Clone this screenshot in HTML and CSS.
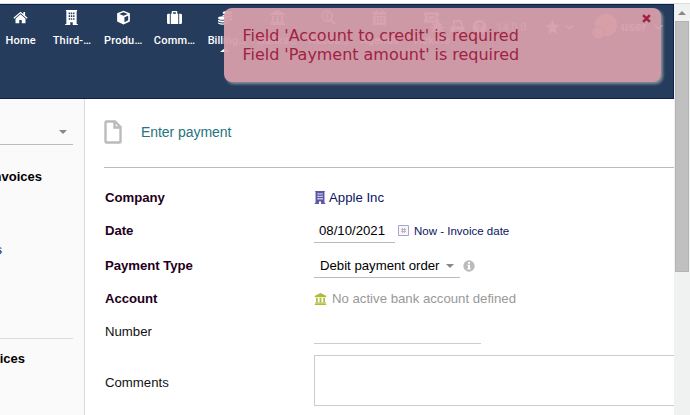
FILE: index.html
```html
<!DOCTYPE html>
<html lang="en">
<head>
<meta charset="utf-8">
<title>Enter payment</title>
<link rel="stylesheet" href="styles.css">
</head>
<body>
<svg class="defs" aria-hidden="true">
  <symbol id="bank" viewBox="0 0 16 16"><path d="M8 0L0 4v1.500h16V4zM2 6.500h2.300v5.700H2zM6.800 6.500h2.400v5.700H6.800zM11.700 6.500H14v5.700h-2.300zM1 12.500h14V14H1zM0 14.400h16V16H0z"/></symbol>
  <symbol id="building" viewBox="0 0 14 16"><path fill-rule="evenodd" d="M1 0h12v1h-.5v13.800h1.200V16H8.300v-3H5.700v3H.3v-1.200h1.200V1H1zM4 2.700v1.700h1.500V2.700zm2.300 0v1.700h1.500V2.700zm2.400 0v1.700h1.500V2.700zM4 5.700v1.700h1.500V5.700zm2.300 0v1.700h1.500V5.700zm2.400 0v1.700h1.500V5.700zM4 8.700v1.700h1.500V8.700zm2.300 0v1.700h1.500V8.700zm2.400 0v1.700h1.500V8.700z"/></symbol>
  <symbol id="chevron" viewBox="0 0 10 6"><path d="M1 1l4 4 4-4" fill="none" stroke="currentColor" stroke-width="1.700"/></symbol>
</svg>
<div class="window">
  <div class="page">
    <header class="topbar">
      <nav class="menu">
        <a class="item"><svg viewBox="0 0 18 16"><path d="M9 1L.5 8.300l1 1.100L9 3l7.500 6.400 1-1.100-3-2.600V1.500h-2v2.400z"/><path d="M9 4.200L3 9.400V15h4.500v-4h3v4H15V9.400z"/></svg><span>Home</span></a>
        <a class="item"><svg viewBox="0 0 14 16"><use href="#building"/></svg><span>Third-…</span></a>
        <a class="item"><svg viewBox="0 0 16 16"><path d="M8 .8l6.800 2.600v8.800L8 15.500l-6.800-3.300V3.400zM8 2.500L3.500 4.200 8 6l4.500-1.800zM9 7.700v5.300l4-2V6.100z" fill-rule="evenodd"/></svg><span>Produ…</span></a>
        <a class="item"><svg viewBox="0 0 16 16"><path fill-rule="evenodd" d="M1.500 4H3v11H1.500Q0 15 0 13.500v-8Q0 4 1.500 4zM4 4h1V2q0-1 1-1h4q1 0 1 1v2h1v11H4zm2.500-1.500V4h3V2.500zM13 4h1.500Q16 4 16 5.500v8q0 1.500-1.500 1.500H13z"/></svg><span>Comm…</span></a>
        <a class="item current"><svg viewBox="0 0 16 16"><ellipse cx="10" cy="3" rx="5" ry="2"/><path d="M5 5q5 2.300 10 0v2q-2 1.500-5 1.300Q9 6.500 5 6.300zM11 9.300q2.500 0 4-1v2q-1.500 1.400-4 1.500z"/><ellipse cx="5" cy="8.500" rx="5" ry="1.900"/><path d="M0 10.300q5 2.300 10 0v1.600q-5 2.600-10 0zM0 13.200q5 2.300 10 0v1.300q-5 2.600-10 0z"/></svg><span>Billing…</span></a>
        <a class="item"><svg viewBox="0 0 16 16"><use href="#bank"/></svg><span>Banks…</span></a>
        <a class="item"><svg viewBox="0 0 16 16"><circle cx="6.500" cy="6.500" r="5.300" fill="none" stroke="currentColor" stroke-width="2"/><path d="M10 11.500l1.500-1.500 4.500 4.500-1.500 1.500z"/><path d="M8.300 4.800q-3-1.400-3.200.2 0 1 1.500 1.400 1.600.5 1.500 1.600-.5 1.600-3.300.4M6.500 3v7" fill="none" stroke="currentColor"/></svg><span>Accou…</span></a>
        <a class="item"><svg viewBox="0 0 16 16"><path fill-rule="evenodd" d="M4 0h2v2h4V0h2v2h2q1 0 1 1v2H1V3q0-1 1-1h2zM1 6h14v9q0 1-1 1H2q-1 0-1-1zm2.500 2v2h2V8zM7 8v2h2V8zm3.500 0v2h2V8zm-7 3.500v2h2v-2zm3.500 0v2h2v-2zm3.500 0v2h2v-2z"/></svg><span>Agenda</span></a>
        <a class="item"><svg viewBox="0 0 16 16"><path fill-rule="evenodd" d="M0 2.500h16V6q-3 2 0 4v3.500H0V10q3-2 0-4zM4 5v6h8V5zm1 1h6v4H5z"/></svg><span>Tickets</span></a>
      </nav>
      <div class="tools">
        <svg class="tool bug" viewBox="0 0 16 16"><path d="M5 3q3-4 6 0v2l3-2 1 1-3 3v1h4v1.500h-4L15 13l-1 1-3-2q-3 4-6 0l-3 2-1-1 3-3.500H0V8h4V7L1 4l1-1 3 2z"/></svg>
        <svg class="tool printer" viewBox="0 0 16 16"><path fill-rule="evenodd" d="M3 0h8l3 3v4q2 0 2 2v5h-3v2H3v-2H0V9q0-2 2-2h1zm2 2v5h7V4h-2V2zm0 9v3h6v-3z"/></svg>
        <svg class="tool help" viewBox="0 0 16 16"><path fill-rule="evenodd" d="M8 0a8 8 0 100 16A8 8 0 008 0zM4.500 5.500q.5-2.700 3.500-2.700 3.700 0 3.700 2.700 0 1.500-2.500 3v1H7V7.800q2-1 2-2.200-.5-1.500-2.300.6zM7 10.800h2.300V13H7z"/></svg>
        <span class="version">14.0.0</span>
        <svg class="tool star" viewBox="0 0 16 16"><path d="M8 0l2.300 5.200L16 6l-4.200 4 1 6L8 13.200 3.200 16l1-6L0 6l5.700-.8z"/></svg>
        <svg class="arrow first" viewBox="0 0 10 6"><use href="#chevron"/></svg>
        <svg class="avatar" viewBox="0 0 28 28"><circle cx="16" cy="12" r="12"/><circle cx="8" cy="20" r="7" stroke="#263c5c"/></svg>
        <span class="user">user</span>
        <svg class="arrow" viewBox="0 0 10 6"><use href="#chevron"/></svg>
      </div>
    </header>
    <div class="columns">
      <aside class="sidebar">
        <div class="search"><i class="caret"></i></div>
        <div class="block customers"><b class="clip">nvoices</b><a class="clip">s</a></div>
        <div class="block vendors"><b class="clip">ices</b></div>
      </aside>
      <main class="content">
        <div class="title">
          <svg viewBox="0 0 18 24"><path d="M2.500 1.500h8.500l5.500 5.500v14.500q0 1-1 1h-13q-1 0-1-1v-19q0-1 1-1zM10.500 1.500v6h6" fill="none" stroke="#bbb" stroke-width="2.400"/></svg>
          <h1>Enter payment</h1>
        </div>
        <div class="form">
          <div class="row company"><label class="req">Company</label><div class="value"><svg class="firm" viewBox="0 0 14 16"><use href="#building"/></svg><a class="link">Apple Inc</a></div></div>
          <div class="row date"><label class="req">Date</label><div class="value"><span class="datebox">08/10/2021</span><svg class="cal" viewBox="0 0 11 11"><path d="M.5.500h10v10H.5z" fill="#f7f5fd" stroke="#a8a4d0"/><path d="M3 4.500h5M3 6.500h5M4.500 3v5M6.500 3v5" stroke="#c0b3bd" fill="none"/></svg><span class="now">Now - Invoice date</span></div></div>
          <div class="row type"><label class="req">Payment Type</label><div class="value"><span class="select">Debit payment order<i class="caret"></i></span><svg class="info" viewBox="0 0 12 12"><circle cx="6" cy="6" r="5.700" fill="#bbb"/><path d="M5 2h2v1.700H5zM4.500 4.700H7v3.600h.7v1.200H4.300V8.300H5V5.900h-.5z" fill="#fff"/></svg></div></div>
          <div class="row account"><label class="req">Account</label><div class="value"><svg class="bank" viewBox="0 0 16 16"><use href="#bank"/></svg><span class="none">No active bank account defined</span></div></div>
          <div class="row number"><label>Number</label><div class="value"><span class="line"></span></div></div>
          <div class="row comments"><label>Comments</label><div class="value"><div class="area"></div></div></div>
        </div>
      </main>
    </div>
  </div>
  <div class="scrollbar"><i class="up"></i><div class="thumb"></div></div>
</div>
<div class="toast"><svg viewBox="0 0 8 8"><path d="M1 1l6 6M7 1L1 7" stroke="#a8213f" stroke-width="2.300"/></svg><p>Field 'Account to credit' is required</p><p>Field 'Payment amount' is required</p></div>
</body>
</html>
```
FILE: styles.css
```css
* { box-sizing: border-box; }
body { margin: 0; width: 690px; height: 415px; overflow: hidden; position: relative; background: #fff; font: 14px "Liberation Sans", Arial, sans-serif; color: #111; }
svg { display: block; fill: currentColor; flex: none; }
.defs { position: absolute; width: 0; height: 0; }
.window { display: flex; height: 415px; padding-top: 3px; }
.page { width: 674px; overflow: hidden; border-top: 1px solid #d9dce2; }
.topbar { position: relative; height: 95px; background: #263c5c; border: solid #0b2149; border-width: 1px 1px 1px 0; color: #fff; }
.menu { display: flex; margin-left: -5px; padding-top: 5px; }
.item { position: relative; width: 51.300px; flex: none; display: flex; flex-direction: column; align-items: center; font: 500 11px/14px Roboto, sans-serif; }
.item svg { width: 15px; height: 15px; margin-bottom: 9px; }
.item span { white-space: nowrap; letter-spacing: .2px; }
.current span { letter-spacing: 0; margin-left: 2px; }
.current::after { content: ""; position: absolute; left: 20px; top: 38px; border: 5px solid transparent; border-top: 0; border-bottom: 4px solid #fff; }
.tools { position: absolute; left: 430px; top: 14px; height: 16px; display: flex; align-items: center; font-weight: bold; color: #fff; }
.tool { width: 15px; height: 14px; }
.printer { margin-left: 5px; }
.help { margin-left: 7px; }
.version { width: 32px; margin-left: 9px; font: 11px Roboto, sans-serif; }
.star { margin-left: 17px; }
.arrow { width: 9px; height: 6px; margin-left: 2px; }
.first { margin-left: 5px; }
.avatar { width: 26px; height: 26px; margin-left: 17px; color: #f4d264; }
.user { width: 27px; margin-left: 4px; font-size: 12px; }
.user + .arrow { margin-left: 6px; }
.columns { display: flex; height: 316px; }
.sidebar { width: 85px; flex: none; background: #fafafa; border-right: 1px solid #dadada; }
.caret { width: 0; height: 0; border: 4px solid transparent; border-top: 4px solid #888; border-bottom: 0; }
.search { width: 73px; height: 46px; border-bottom: 1px solid #bbb; padding: 31px 0 0 59px; }
.search .caret { display: block; }
.block { width: 73px; overflow: hidden; }
.clip { display: flex; justify-content: flex-end; white-space: nowrap; line-height: 16px; font-size: 13px; color: #000; }
.customers { height: 194px; padding-top: 24px; border-bottom: 1px solid #ddd; }
.customers b { width: 42px; }
.customers a { width: 2px; margin-top: 57px; color: #0a1464; }
.vendors { padding-top: 12px; }
.vendors b { width: 25px; }
.content { flex: 1; min-width: 0; padding-left: 19px; }
.title { height: 69px; display: flex; align-items: center; border-bottom: 1px solid #bbb; padding-bottom: 2px; }
.title svg { width: 18px; height: 24px; }
h1 { margin: 0 0 0 19px; font-size: 14px; font-weight: normal; color: #25747e; letter-spacing: -.05px; }
.form { padding: 12px 0 0 1px; }
.row { display: flex; align-items: center; }
.row label { width: 209px; flex: none; font-size: 13.200px; }
.row .req { font-weight: bold; color: #1f0020; letter-spacing: -.05px; }
.value { flex: 1; display: flex; align-items: center; }
.company { height: 34px; }
.date { height: 33px; }
.type { height: 36px; }
.account { height: 31px; }
.number { height: 34px; }
.comments { height: 67px; }
.comments label { padding-top: 1px; }
.firm { width: 12px; height: 13px; color: #5a58a5; }
.link { margin-left: 3px; color: #0a1464; font-size: 13.200px; }
.datebox { width: 81px; height: 24px; padding-left: 5px; line-height: 23px; border-bottom: 1px solid #bbb; font-size: 13.200px; color: #000; }
.cal { width: 11px; height: 11px; margin-left: 3px; }
.now { margin-left: 5px; font-size: 11.500px; color: #0a1464; white-space: nowrap; }
.select { width: 146px; height: 25px; display: flex; align-items: center; padding-left: 6px; border-bottom: 1px solid #bbb; font-size: 13.200px; color: #000; white-space: nowrap; }
.type .value { padding-top: 1px; }
.select .caret { margin: 2px 0 0 7px; }
.info { width: 12px; height: 12px; margin-left: 3px; }
.bank { width: 13px; height: 12px; color: #b0bb39; }
.none { margin-left: 5px; font-size: 13.200px; color: #999; }
.line { width: 167px; height: 26px; border-bottom: 1px solid #ccc; }
.area { width: 370px; height: 51px; flex: none; border: 1px solid #ccc; margin-bottom: 3px; }
.scrollbar { width: 16px; background: #f0f2f2; border-top: 1px solid #ddd; display: flex; flex-direction: column; align-items: center; }
.up { margin: 7px 0 6px; width: 0; border: 4px solid transparent; border-top: 0; border-bottom: 4px solid #888; }
.thumb { width: 14px; height: 251px; background: #c0c0c0; border: 1px solid #b4b4b4; }
.toast { position: absolute; left: 224px; top: 8px; width: 437px; height: 74px; padding: 18px 18.500px; border-radius: 8px; background: #d69eac; opacity: .95; box-shadow: 2px 2px 3px #8b999f; font: 16px/19px "DejaVu Sans", Verdana, sans-serif; letter-spacing: -.03px; color: #a8213f; }
.toast p { margin: 0; white-space: nowrap; }
.toast svg { position: absolute; right: 10px; top: 6px; width: 9px; height: 9px; }
```
